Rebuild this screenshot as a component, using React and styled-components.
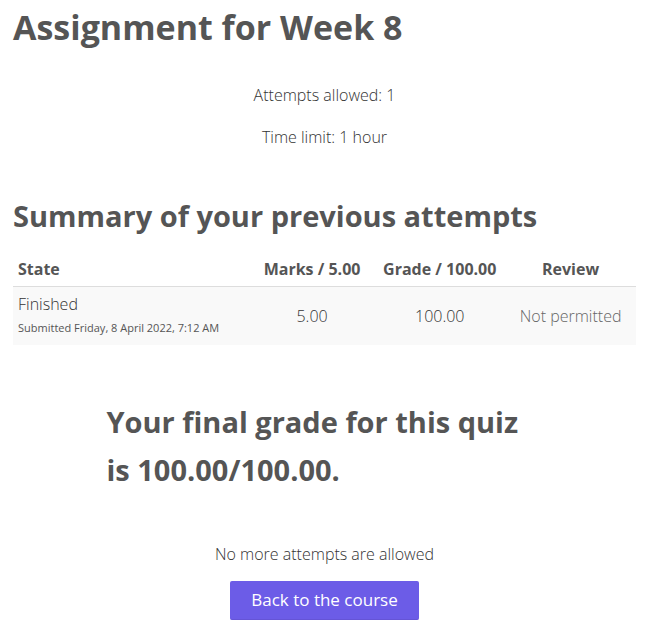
import React from "react";
import styled, { createGlobalStyle } from "styled-components";

const GlobalStyle = createGlobalStyle`
  *, *::before, *::after { box-sizing: border-box; }
  body {
    margin: 0;
    background: #fff;
    color: #333;
    font-family: "Open Sans", sans-serif;
    font-size: 16px;
    font-weight: 300;
    line-height: 24px;
  }
`;

const Page = styled.main`
  padding: 3px 12px 20px 13px;
`;

const Title = styled.h1`
  margin: 0 0 32px;
  color: #555;
  font-size: 34px;
  line-height: 48px;
  font-weight: 700;
`;

const QuizInfo = styled.section`
  text-align: center;
  margin-bottom: 43px;
`;

const InfoLine = styled.p`
  margin: 0 0 18px;
`;

const Heading = styled.h2`
  margin: 0;
  color: #555;
  font-size: 29px;
  line-height: 48px;
  font-weight: 700;
`;

const Attempts = styled.table`
  width: 100%;
  margin-top: 12px;
  border-collapse: collapse;
`;

const HeadCell = styled.th`
  padding: 5px;
  border-bottom: 1px solid #ddd;
  color: #555;
  font-weight: 700;
  text-align: ${({ $align }) => $align || "center"};
  width: ${({ $width }) => $width || "auto"};
`;

const Cell = styled.td`
  padding: 5px;
  background: #f9f9f9;
  text-align: ${({ $align }) => $align || "center"};
  color: ${({ $muted }) => ($muted ? "#666" : "inherit")};
`;

const Submitted = styled.span`
  display: block;
  color: #555;
  font-size: 11px;
  font-weight: 400;
`;

const Feedback = styled.section`
  width: 70%;
  margin: 53px auto 48px;
`;

const Actions = styled.div`
  display: flex;
  flex-direction: column;
  align-items: center;
  gap: 15px;
`;

const Note = styled.p`
  margin: 0;
`;

const BackButton = styled.button`
  border: 0;
  border-bottom: 1px solid #6554d6;
  border-radius: 2px;
  padding: 7px 21px;
  background: #6c5ce7;
  color: #fff;
  font: inherit;
  font-size: 17px;
  font-weight: 400;
  cursor: pointer;
`;

export default function App() {
  return (
    <Page>
      <GlobalStyle />
      <Title>Assignment for Week 8</Title>
      <QuizInfo>
        <InfoLine>Attempts allowed: 1</InfoLine>
        <InfoLine>Time limit: 1 hour</InfoLine>
      </QuizInfo>
      <Heading>Summary of your previous attempts</Heading>
      <Attempts>
        <thead>
          <tr>
            <HeadCell scope="col" $align="left">State</HeadCell>
            <HeadCell scope="col" $width="20%">Marks / 5.00</HeadCell>
            <HeadCell scope="col" $width="21%">Grade / 100.00</HeadCell>
            <HeadCell scope="col" $width="21%">Review</HeadCell>
          </tr>
        </thead>
        <tbody>
          <tr>
            <Cell $align="left">
              Finished
              <Submitted>Submitted Friday, 8 April 2022, 7:12 AM</Submitted>
            </Cell>
            <Cell>5.00</Cell>
            <Cell>100.00</Cell>
            <Cell $muted>Not permitted</Cell>
          </tr>
        </tbody>
      </Attempts>
      <Feedback>
        <Heading>Your final grade for this quiz is 100.00/100.00.</Heading>
      </Feedback>
      <Actions>
        <Note>No more attempts are allowed</Note>
        <BackButton type="button">Back to the course</BackButton>
      </Actions>
    </Page>
  );
}
